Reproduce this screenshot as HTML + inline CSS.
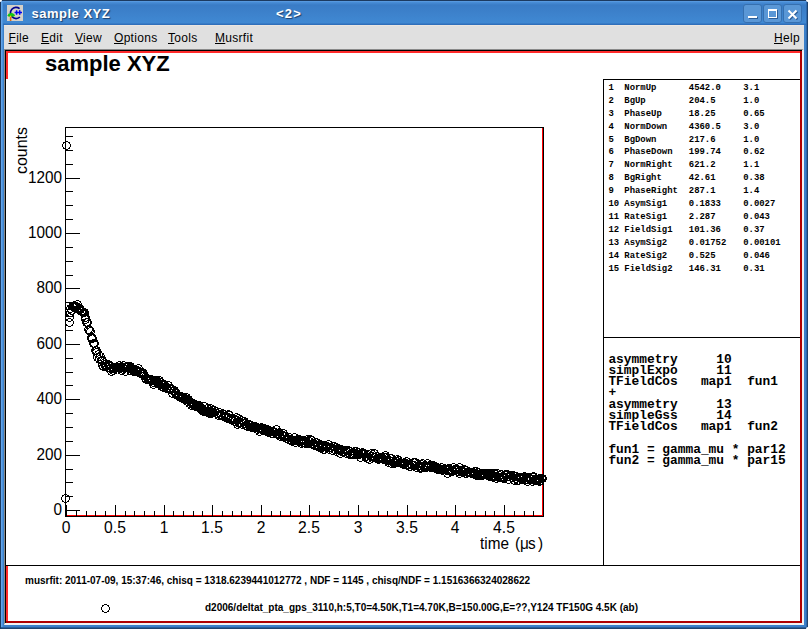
<!DOCTYPE html>
<html><head><meta charset="utf-8"><style>
*{margin:0;padding:0;box-sizing:border-box}
html,body{width:808px;height:629px;overflow:hidden;background:#fff}
body{position:relative;font-family:"Liberation Sans",sans-serif}
.a{position:absolute}
#win{left:0;top:0;width:808px;height:629px;background:#3b80ca}
#tb{left:0;top:0;width:808px;height:25px;background:linear-gradient(#1c3a60 0,#1c3a60 1px,#62a2e6 1px,#4a8fd8 2px,#3a7cc6 5px,#3d82cc 14px,#4089d3 23px,#2f6fbb 24px,#2f6fbb 25px)}
#lb{left:0;top:0;width:1px;height:629px;background:#1c3a60}
#lb2{left:1px;top:1px;width:2px;height:626px;background:linear-gradient(90deg,#62a4ea 0,#62a4ea 1px,#4e93dc 1px)}
#rb{left:806px;top:0;width:2px;height:629px;background:linear-gradient(90deg,#2e69ad 0,#2e69ad 1px,#1f4470 1px)}
#bb{left:1px;top:627px;width:806px;height:2px;background:linear-gradient(#2a5f9c 0,#2a5f9c 1px,#1f4470 1px)}
#c1{left:806px;top:0;width:2px;height:2px;background:#fff;border-bottom-left-radius:2px}
#c2{left:0;top:0;width:2px;height:2px;background:#fff;border-bottom-right-radius:2px}
#c3{left:806px;top:627px;width:2px;height:2px;background:#fff;border-top-left-radius:2px}
#menu{left:4px;top:25px;width:800px;height:24px;background:#e0e0e0;border-top:1px solid #ebe6e1}
.mi{position:absolute;top:5px;font-size:12px;color:#000;line-height:14px;letter-spacing:0.3px}
.mi u{text-decoration:underline}
#title{left:31.5px;top:5.6px;font-weight:bold;font-size:13px;color:#fff;letter-spacing:0.5px;text-shadow:1px 1px 1px #1d3f6a;line-height:15px}
#title2{left:276px;top:5.6px;font-weight:bold;font-size:13px;color:#fff;letter-spacing:1.2px;text-shadow:1px 1px 1px #1d3f6a;line-height:15px}
.btn{position:absolute;top:4px;width:19px;height:19px;background:#5a97d6;border:1px solid #3670b0;border-radius:3px}
#cf{left:4px;top:49px;width:800px;height:576px;background:#fff;border-top:1px solid #8a8a8a;border-left:1px solid #8a8a8a;border-right:2px solid #f2f2f2;border-bottom:2px solid #f2f2f2}
#cv{left:5px;top:50px;width:797px;height:573px;border-top:1px solid #000;border-left:1px solid #000}
.yl{position:absolute;width:60px;left:2px;text-align:right;font-size:17px;line-height:18px;color:#000;transform:scaleX(0.9);transform-origin:100% 50%}
.xl{position:absolute;width:60px;top:518.6px;text-align:center;font-size:17px;line-height:18px;color:#000;transform:scaleX(0.92)}
.pr span{position:absolute;top:0;font:bold 8.93px "Liberation Mono",monospace;line-height:11px;white-space:pre;color:#000}
.pr{position:absolute;left:0;top:0}
.th{position:absolute;left:608.4px;font:bold 12.85px "Liberation Mono",monospace;line-height:14px;white-space:pre;color:#000}
.tl{position:absolute;top:534.5px;font-size:17px;line-height:18px;white-space:nowrap;transform:scaleX(0.9);transform-origin:0 0}
.bt{position:absolute;font-weight:bold;font-size:10px;line-height:12px;white-space:pre;color:#000}
</style></head><body>
<div id="win" class="a"></div>
<div id="tb" class="a"></div>
<div id="lb" class="a"></div><div id="lb2" class="a"></div><div id="rb" class="a"></div><div id="bb" class="a"></div><div id="c1" class="a"></div><div id="c2" class="a"></div><div id="c3" class="a"></div>
<svg class="a" style="left:7px;top:5px" width="16" height="16" viewBox="0 0 16 16">
<rect width="16" height="16" fill="#d4d0c8"/>
<path d="M12.6 3.6A5.6 5.6 0 1 0 12.9 12" fill="none" stroke="#000090" stroke-width="1.7"/>
<path d="M7.6 7.5h7.4M9.6 5.2v4.6M12.7 5.2v4.6" stroke="#0000f0" stroke-width="1.5"/>
<path d="M0.3 10.8q0.8-2.6 3.8-2.7q3.2 0 3.9 2.6q-1 1.1-3.9 0.9q-2.9 0.2-3.8-0.8z" fill="#14b814"/>
<path d="M1.5 9.3l1 0.6M4 8.9l1 0.7M6 9.6l0.8 0.5" stroke="#00ff00" stroke-width="0.8"/>
<path d="M2.8 11.3h1.6v4.7h-1.6z" fill="#e06a10"/>
<circle cx="3.6" cy="11.3" r="0.8" fill="#f0e000"/>
</svg>
<div id="title" class="a">sample XYZ</div>
<div id="title2" class="a">&lt;2&gt;</div>
<div class="btn" style="left:743px"><div class="a" style="left:4px;top:11px;width:9px;height:2px;background:#fff;box-shadow:1px 1px 0 #2d5d96"></div></div>
<div class="btn" style="left:763px"><div class="a" style="left:4px;top:4px;width:9px;height:9px;border:1px solid #fff;border-top-width:2px;box-shadow:1px 1px 0 #2d5d96"></div></div>
<div class="btn" style="left:783px"><svg class="a" style="left:3px;top:4px" width="12" height="11"><path d="M2.5 2.5L10.5 10.5M10.5 2.5L2.5 10.5" stroke="#2d5d96" stroke-width="2"/><path d="M1.5 1.5L9.5 9.5M9.5 1.5L1.5 9.5" stroke="#fff" stroke-width="2"/></svg></div>
<div id="menu" class="a">
<div class="mi" style="left:4.5px"><u>F</u>ile</div>
<div class="mi" style="left:37px"><u>E</u>dit</div>
<div class="mi" style="left:71px"><u>V</u>iew</div>
<div class="mi" style="left:110px"><u>O</u>ptions</div>
<div class="mi" style="left:164px"><u>T</u>ools</div>
<div class="mi" style="left:211px"><u>M</u>usrfit</div>
<div class="mi" style="left:770px"><u>H</u>elp</div>
</div>
<div id="cf" class="a"></div>
<div id="cv" class="a"></div>
<svg class="a" style="left:0;top:0" width="808" height="629">
<g shape-rendering="crispEdges">
<rect x="6" y="51" width="796" height="2" fill="#ff2a2a"/>
<rect x="6" y="51" width="2" height="28" fill="#ff2a2a"/>
<rect x="6" y="566" width="2" height="57" fill="#ff2a2a"/>
<rect x="800" y="51" width="2" height="572" fill="#b00000"/>
<rect x="6" y="621" width="796" height="2" fill="#b00000"/>
<rect x="6" y="565" width="794" height="1" fill="#000"/>
<rect x="603" y="79" width="1" height="486" fill="#000"/>
<rect x="603" y="79" width="197" height="1" fill="#000"/>
<rect x="603" y="337" width="197" height="1" fill="#000"/>
</g>
<g stroke="#000" stroke-width="1" shape-rendering="crispEdges"><path d="M65.5 127.5H543.5V516.5H65.5Z" fill="none" stroke="#000" stroke-width="1"/><path d="M542.5 128V515.5H66" fill="none" stroke="#f00" stroke-width="1"/><path d="M66 510.5h14"/><path d="M66 496.5h7"/><path d="M66 482.5h7"/><path d="M66 469.5h7"/><path d="M66 455.5h14"/><path d="M66 441.5h7"/><path d="M66 427.5h7"/><path d="M66 413.5h7"/><path d="M66 399.5h14"/><path d="M66 385.5h7"/><path d="M66 372.5h7"/><path d="M66 358.5h7"/><path d="M66 344.5h14"/><path d="M66 330.5h7"/><path d="M66 316.5h7"/><path d="M66 302.5h7"/><path d="M66 288.5h14"/><path d="M66 275.5h7"/><path d="M66 261.5h7"/><path d="M66 247.5h7"/><path d="M66 233.5h14"/><path d="M66 219.5h7"/><path d="M66 205.5h7"/><path d="M66 191.5h7"/><path d="M66 178.5h14"/><path d="M66 164.5h7"/><path d="M66 150.5h7"/><path d="M66 136.5h7"/><path d="M66.5 516V505"/><path d="M76.5 516V510.5"/><path d="M86.5 516V510.5"/><path d="M95.5 516V510.5"/><path d="M105.5 516V510.5"/><path d="M115.5 516V505"/><path d="M125.5 516V510.5"/><path d="M134.5 516V510.5"/><path d="M144.5 516V510.5"/><path d="M154.5 516V510.5"/><path d="M164.5 516V505"/><path d="M173.5 516V510.5"/><path d="M183.5 516V510.5"/><path d="M193.5 516V510.5"/><path d="M202.5 516V510.5"/><path d="M212.5 516V505"/><path d="M222.5 516V510.5"/><path d="M232.5 516V510.5"/><path d="M241.5 516V510.5"/><path d="M251.5 516V510.5"/><path d="M261.5 516V505"/><path d="M271.5 516V510.5"/><path d="M280.5 516V510.5"/><path d="M290.5 516V510.5"/><path d="M300.5 516V510.5"/><path d="M309.5 516V505"/><path d="M319.5 516V510.5"/><path d="M329.5 516V510.5"/><path d="M339.5 516V510.5"/><path d="M348.5 516V510.5"/><path d="M358.5 516V505"/><path d="M368.5 516V510.5"/><path d="M378.5 516V510.5"/><path d="M387.5 516V510.5"/><path d="M397.5 516V510.5"/><path d="M407.5 516V505"/><path d="M416.5 516V510.5"/><path d="M426.5 516V510.5"/><path d="M436.5 516V510.5"/><path d="M446.5 516V510.5"/><path d="M455.5 516V505"/><path d="M465.5 516V510.5"/><path d="M475.5 516V510.5"/><path d="M485.5 516V510.5"/><path d="M494.5 516V510.5"/><path d="M504.5 516V505"/><path d="M514.5 516V510.5"/><path d="M524.5 516V510.5"/><path d="M533.5 516V510.5"/></g>
<defs><path id="m" d="M-1 -4h3v1h-3zM-3 -3h2v1h-2zM2 -3h2v1h-2zM-3 -2h1v1h-1zM3 -2h1v1h-1zM-4 -1h1v3h-1zM4 -1h1v3h-1zM-3 2h1v1h-1zM3 2h1v1h-1zM-3 3h2v1h-2zM2 3h2v1h-2zM-1 4h3v1h-3z"/></defs>
<g fill="#000" shape-rendering="crispEdges"><use href="#m" x="66" y="145"/><use href="#m" x="65" y="498"/><use href="#m" x="69" y="322"/><use href="#m" x="69" y="317"/><use href="#m" x="70" y="312"/><use href="#m" x="70" y="308"/><use href="#m" x="71" y="310"/><use href="#m" x="72" y="306"/><use href="#m" x="73" y="306"/><use href="#m" x="74" y="307"/><use href="#m" x="74" y="305"/><use href="#m" x="75" y="306"/><use href="#m" x="76" y="306"/><use href="#m" x="77" y="304"/><use href="#m" x="78" y="309"/><use href="#m" x="79" y="309"/><use href="#m" x="79" y="308"/><use href="#m" x="80" y="309"/><use href="#m" x="81" y="311"/><use href="#m" x="82" y="311"/><use href="#m" x="83" y="312"/><use href="#m" x="84" y="312"/><use href="#m" x="85" y="317"/><use href="#m" x="85" y="319"/><use href="#m" x="86" y="322"/><use href="#m" x="87" y="322"/><use href="#m" x="88" y="329"/><use href="#m" x="89" y="330"/><use href="#m" x="90" y="331"/><use href="#m" x="91" y="338"/><use href="#m" x="91" y="337"/><use href="#m" x="92" y="338"/><use href="#m" x="93" y="343"/><use href="#m" x="94" y="343"/><use href="#m" x="95" y="350"/><use href="#m" x="96" y="350"/><use href="#m" x="96" y="352"/><use href="#m" x="97" y="357"/><use href="#m" x="98" y="354"/><use href="#m" x="99" y="359"/><use href="#m" x="100" y="356"/><use href="#m" x="101" y="360"/><use href="#m" x="102" y="360"/><use href="#m" x="102" y="365"/><use href="#m" x="103" y="366"/><use href="#m" x="104" y="364"/><use href="#m" x="105" y="366"/><use href="#m" x="106" y="365"/><use href="#m" x="107" y="367"/><use href="#m" x="108" y="365"/><use href="#m" x="108" y="364"/><use href="#m" x="109" y="365"/><use href="#m" x="110" y="368"/><use href="#m" x="111" y="371"/><use href="#m" x="112" y="368"/><use href="#m" x="113" y="367"/><use href="#m" x="113" y="370"/><use href="#m" x="114" y="368"/><use href="#m" x="115" y="367"/><use href="#m" x="116" y="367"/><use href="#m" x="117" y="367"/><use href="#m" x="118" y="367"/><use href="#m" x="119" y="365"/><use href="#m" x="119" y="368"/><use href="#m" x="120" y="367"/><use href="#m" x="121" y="370"/><use href="#m" x="122" y="367"/><use href="#m" x="123" y="365"/><use href="#m" x="124" y="368"/><use href="#m" x="125" y="371"/><use href="#m" x="125" y="367"/><use href="#m" x="126" y="367"/><use href="#m" x="127" y="366"/><use href="#m" x="128" y="366"/><use href="#m" x="129" y="368"/><use href="#m" x="130" y="366"/><use href="#m" x="130" y="370"/><use href="#m" x="131" y="368"/><use href="#m" x="132" y="368"/><use href="#m" x="133" y="371"/><use href="#m" x="134" y="371"/><use href="#m" x="135" y="369"/><use href="#m" x="136" y="370"/><use href="#m" x="136" y="371"/><use href="#m" x="137" y="370"/><use href="#m" x="138" y="368"/><use href="#m" x="139" y="372"/><use href="#m" x="140" y="373"/><use href="#m" x="141" y="373"/><use href="#m" x="142" y="372"/><use href="#m" x="142" y="373"/><use href="#m" x="143" y="373"/><use href="#m" x="144" y="375"/><use href="#m" x="145" y="378"/><use href="#m" x="146" y="379"/><use href="#m" x="147" y="378"/><use href="#m" x="147" y="378"/><use href="#m" x="148" y="379"/><use href="#m" x="149" y="379"/><use href="#m" x="150" y="379"/><use href="#m" x="151" y="379"/><use href="#m" x="152" y="380"/><use href="#m" x="153" y="384"/><use href="#m" x="153" y="382"/><use href="#m" x="154" y="380"/><use href="#m" x="155" y="380"/><use href="#m" x="156" y="380"/><use href="#m" x="157" y="382"/><use href="#m" x="158" y="383"/><use href="#m" x="159" y="380"/><use href="#m" x="159" y="384"/><use href="#m" x="160" y="382"/><use href="#m" x="161" y="386"/><use href="#m" x="162" y="384"/><use href="#m" x="163" y="387"/><use href="#m" x="164" y="384"/><use href="#m" x="164" y="385"/><use href="#m" x="165" y="386"/><use href="#m" x="166" y="388"/><use href="#m" x="167" y="388"/><use href="#m" x="168" y="385"/><use href="#m" x="169" y="388"/><use href="#m" x="170" y="389"/><use href="#m" x="170" y="388"/><use href="#m" x="171" y="389"/><use href="#m" x="172" y="393"/><use href="#m" x="173" y="390"/><use href="#m" x="174" y="390"/><use href="#m" x="175" y="393"/><use href="#m" x="176" y="393"/><use href="#m" x="176" y="393"/><use href="#m" x="177" y="395"/><use href="#m" x="178" y="395"/><use href="#m" x="179" y="396"/><use href="#m" x="180" y="397"/><use href="#m" x="181" y="397"/><use href="#m" x="181" y="396"/><use href="#m" x="182" y="397"/><use href="#m" x="183" y="397"/><use href="#m" x="184" y="399"/><use href="#m" x="185" y="398"/><use href="#m" x="186" y="397"/><use href="#m" x="187" y="401"/><use href="#m" x="187" y="399"/><use href="#m" x="188" y="399"/><use href="#m" x="189" y="403"/><use href="#m" x="190" y="402"/><use href="#m" x="191" y="405"/><use href="#m" x="192" y="404"/><use href="#m" x="193" y="403"/><use href="#m" x="193" y="404"/><use href="#m" x="194" y="405"/><use href="#m" x="195" y="406"/><use href="#m" x="196" y="405"/><use href="#m" x="197" y="406"/><use href="#m" x="198" y="405"/><use href="#m" x="198" y="407"/><use href="#m" x="199" y="405"/><use href="#m" x="200" y="408"/><use href="#m" x="201" y="409"/><use href="#m" x="202" y="410"/><use href="#m" x="203" y="411"/><use href="#m" x="204" y="406"/><use href="#m" x="204" y="410"/><use href="#m" x="205" y="411"/><use href="#m" x="206" y="411"/><use href="#m" x="207" y="408"/><use href="#m" x="208" y="411"/><use href="#m" x="209" y="413"/><use href="#m" x="210" y="408"/><use href="#m" x="210" y="412"/><use href="#m" x="211" y="413"/><use href="#m" x="212" y="410"/><use href="#m" x="213" y="412"/><use href="#m" x="214" y="410"/><use href="#m" x="215" y="411"/><use href="#m" x="215" y="411"/><use href="#m" x="216" y="413"/><use href="#m" x="217" y="413"/><use href="#m" x="218" y="415"/><use href="#m" x="219" y="412"/><use href="#m" x="220" y="414"/><use href="#m" x="221" y="415"/><use href="#m" x="221" y="415"/><use href="#m" x="222" y="413"/><use href="#m" x="223" y="416"/><use href="#m" x="224" y="414"/><use href="#m" x="225" y="416"/><use href="#m" x="226" y="416"/><use href="#m" x="227" y="418"/><use href="#m" x="227" y="417"/><use href="#m" x="228" y="414"/><use href="#m" x="229" y="415"/><use href="#m" x="230" y="419"/><use href="#m" x="231" y="418"/><use href="#m" x="232" y="420"/><use href="#m" x="232" y="419"/><use href="#m" x="233" y="418"/><use href="#m" x="234" y="421"/><use href="#m" x="235" y="419"/><use href="#m" x="236" y="417"/><use href="#m" x="237" y="424"/><use href="#m" x="238" y="418"/><use href="#m" x="238" y="422"/><use href="#m" x="239" y="423"/><use href="#m" x="240" y="422"/><use href="#m" x="241" y="420"/><use href="#m" x="242" y="424"/><use href="#m" x="243" y="421"/><use href="#m" x="244" y="421"/><use href="#m" x="244" y="423"/><use href="#m" x="245" y="425"/><use href="#m" x="246" y="425"/><use href="#m" x="247" y="426"/><use href="#m" x="248" y="424"/><use href="#m" x="249" y="425"/><use href="#m" x="249" y="424"/><use href="#m" x="250" y="425"/><use href="#m" x="251" y="427"/><use href="#m" x="252" y="426"/><use href="#m" x="253" y="427"/><use href="#m" x="254" y="426"/><use href="#m" x="255" y="426"/><use href="#m" x="255" y="427"/><use href="#m" x="256" y="427"/><use href="#m" x="257" y="429"/><use href="#m" x="258" y="428"/><use href="#m" x="259" y="431"/><use href="#m" x="260" y="428"/><use href="#m" x="261" y="428"/><use href="#m" x="261" y="427"/><use href="#m" x="262" y="429"/><use href="#m" x="263" y="430"/><use href="#m" x="264" y="428"/><use href="#m" x="265" y="429"/><use href="#m" x="266" y="431"/><use href="#m" x="266" y="430"/><use href="#m" x="267" y="429"/><use href="#m" x="268" y="432"/><use href="#m" x="269" y="431"/><use href="#m" x="270" y="431"/><use href="#m" x="271" y="433"/><use href="#m" x="272" y="433"/><use href="#m" x="272" y="431"/><use href="#m" x="273" y="431"/><use href="#m" x="274" y="432"/><use href="#m" x="275" y="432"/><use href="#m" x="276" y="429"/><use href="#m" x="277" y="434"/><use href="#m" x="278" y="433"/><use href="#m" x="278" y="434"/><use href="#m" x="279" y="432"/><use href="#m" x="280" y="436"/><use href="#m" x="281" y="434"/><use href="#m" x="282" y="435"/><use href="#m" x="283" y="433"/><use href="#m" x="283" y="436"/><use href="#m" x="284" y="436"/><use href="#m" x="285" y="436"/><use href="#m" x="286" y="438"/><use href="#m" x="287" y="438"/><use href="#m" x="288" y="439"/><use href="#m" x="289" y="437"/><use href="#m" x="289" y="437"/><use href="#m" x="290" y="439"/><use href="#m" x="291" y="440"/><use href="#m" x="292" y="441"/><use href="#m" x="293" y="440"/><use href="#m" x="294" y="437"/><use href="#m" x="295" y="440"/><use href="#m" x="295" y="442"/><use href="#m" x="296" y="440"/><use href="#m" x="297" y="439"/><use href="#m" x="298" y="441"/><use href="#m" x="299" y="439"/><use href="#m" x="300" y="441"/><use href="#m" x="300" y="440"/><use href="#m" x="301" y="443"/><use href="#m" x="302" y="442"/><use href="#m" x="303" y="440"/><use href="#m" x="304" y="442"/><use href="#m" x="305" y="443"/><use href="#m" x="306" y="441"/><use href="#m" x="306" y="441"/><use href="#m" x="307" y="439"/><use href="#m" x="308" y="443"/><use href="#m" x="309" y="441"/><use href="#m" x="310" y="439"/><use href="#m" x="311" y="440"/><use href="#m" x="312" y="443"/><use href="#m" x="312" y="444"/><use href="#m" x="313" y="443"/><use href="#m" x="314" y="445"/><use href="#m" x="315" y="442"/><use href="#m" x="316" y="442"/><use href="#m" x="317" y="446"/><use href="#m" x="318" y="445"/><use href="#m" x="318" y="445"/><use href="#m" x="319" y="447"/><use href="#m" x="320" y="444"/><use href="#m" x="321" y="445"/><use href="#m" x="322" y="447"/><use href="#m" x="323" y="449"/><use href="#m" x="323" y="446"/><use href="#m" x="324" y="449"/><use href="#m" x="325" y="445"/><use href="#m" x="326" y="447"/><use href="#m" x="327" y="446"/><use href="#m" x="328" y="444"/><use href="#m" x="329" y="447"/><use href="#m" x="329" y="449"/><use href="#m" x="330" y="447"/><use href="#m" x="331" y="447"/><use href="#m" x="332" y="450"/><use href="#m" x="333" y="446"/><use href="#m" x="334" y="446"/><use href="#m" x="335" y="447"/><use href="#m" x="335" y="447"/><use href="#m" x="336" y="451"/><use href="#m" x="337" y="449"/><use href="#m" x="338" y="448"/><use href="#m" x="339" y="449"/><use href="#m" x="340" y="453"/><use href="#m" x="340" y="449"/><use href="#m" x="341" y="449"/><use href="#m" x="342" y="451"/><use href="#m" x="343" y="452"/><use href="#m" x="344" y="451"/><use href="#m" x="345" y="450"/><use href="#m" x="346" y="450"/><use href="#m" x="346" y="453"/><use href="#m" x="347" y="452"/><use href="#m" x="348" y="450"/><use href="#m" x="349" y="454"/><use href="#m" x="350" y="454"/><use href="#m" x="351" y="453"/><use href="#m" x="352" y="453"/><use href="#m" x="352" y="454"/><use href="#m" x="353" y="452"/><use href="#m" x="354" y="451"/><use href="#m" x="355" y="454"/><use href="#m" x="356" y="451"/><use href="#m" x="357" y="454"/><use href="#m" x="357" y="452"/><use href="#m" x="358" y="454"/><use href="#m" x="359" y="454"/><use href="#m" x="360" y="457"/><use href="#m" x="361" y="453"/><use href="#m" x="362" y="452"/><use href="#m" x="363" y="454"/><use href="#m" x="363" y="453"/><use href="#m" x="364" y="454"/><use href="#m" x="365" y="456"/><use href="#m" x="366" y="456"/><use href="#m" x="367" y="458"/><use href="#m" x="368" y="454"/><use href="#m" x="369" y="459"/><use href="#m" x="369" y="459"/><use href="#m" x="370" y="456"/><use href="#m" x="371" y="453"/><use href="#m" x="372" y="456"/><use href="#m" x="373" y="457"/><use href="#m" x="374" y="453"/><use href="#m" x="374" y="457"/><use href="#m" x="375" y="457"/><use href="#m" x="376" y="456"/><use href="#m" x="377" y="458"/><use href="#m" x="378" y="459"/><use href="#m" x="379" y="457"/><use href="#m" x="380" y="458"/><use href="#m" x="380" y="457"/><use href="#m" x="381" y="457"/><use href="#m" x="382" y="458"/><use href="#m" x="383" y="459"/><use href="#m" x="384" y="457"/><use href="#m" x="385" y="455"/><use href="#m" x="386" y="460"/><use href="#m" x="386" y="457"/><use href="#m" x="387" y="460"/><use href="#m" x="388" y="462"/><use href="#m" x="389" y="460"/><use href="#m" x="390" y="458"/><use href="#m" x="391" y="458"/><use href="#m" x="391" y="463"/><use href="#m" x="392" y="461"/><use href="#m" x="393" y="462"/><use href="#m" x="394" y="463"/><use href="#m" x="395" y="462"/><use href="#m" x="396" y="461"/><use href="#m" x="397" y="461"/><use href="#m" x="397" y="459"/><use href="#m" x="398" y="460"/><use href="#m" x="399" y="462"/><use href="#m" x="400" y="462"/><use href="#m" x="401" y="463"/><use href="#m" x="402" y="463"/><use href="#m" x="403" y="463"/><use href="#m" x="403" y="464"/><use href="#m" x="404" y="462"/><use href="#m" x="405" y="463"/><use href="#m" x="406" y="461"/><use href="#m" x="407" y="465"/><use href="#m" x="408" y="464"/><use href="#m" x="408" y="464"/><use href="#m" x="409" y="466"/><use href="#m" x="410" y="466"/><use href="#m" x="411" y="464"/><use href="#m" x="412" y="465"/><use href="#m" x="413" y="462"/><use href="#m" x="414" y="465"/><use href="#m" x="414" y="465"/><use href="#m" x="415" y="462"/><use href="#m" x="416" y="467"/><use href="#m" x="417" y="464"/><use href="#m" x="418" y="466"/><use href="#m" x="419" y="465"/><use href="#m" x="420" y="467"/><use href="#m" x="420" y="468"/><use href="#m" x="421" y="464"/><use href="#m" x="422" y="463"/><use href="#m" x="423" y="466"/><use href="#m" x="424" y="467"/><use href="#m" x="425" y="466"/><use href="#m" x="425" y="465"/><use href="#m" x="426" y="467"/><use href="#m" x="427" y="463"/><use href="#m" x="428" y="466"/><use href="#m" x="429" y="465"/><use href="#m" x="430" y="467"/><use href="#m" x="431" y="466"/><use href="#m" x="431" y="465"/><use href="#m" x="432" y="467"/><use href="#m" x="433" y="465"/><use href="#m" x="434" y="467"/><use href="#m" x="435" y="467"/><use href="#m" x="436" y="467"/><use href="#m" x="437" y="467"/><use href="#m" x="437" y="469"/><use href="#m" x="438" y="468"/><use href="#m" x="439" y="469"/><use href="#m" x="440" y="469"/><use href="#m" x="441" y="467"/><use href="#m" x="442" y="470"/><use href="#m" x="442" y="469"/><use href="#m" x="443" y="469"/><use href="#m" x="444" y="468"/><use href="#m" x="445" y="469"/><use href="#m" x="446" y="470"/><use href="#m" x="447" y="473"/><use href="#m" x="448" y="468"/><use href="#m" x="448" y="470"/><use href="#m" x="449" y="469"/><use href="#m" x="450" y="471"/><use href="#m" x="451" y="470"/><use href="#m" x="452" y="471"/><use href="#m" x="453" y="467"/><use href="#m" x="454" y="469"/><use href="#m" x="454" y="469"/><use href="#m" x="455" y="470"/><use href="#m" x="456" y="469"/><use href="#m" x="457" y="469"/><use href="#m" x="458" y="471"/><use href="#m" x="459" y="473"/><use href="#m" x="459" y="467"/><use href="#m" x="460" y="470"/><use href="#m" x="461" y="471"/><use href="#m" x="462" y="471"/><use href="#m" x="463" y="471"/><use href="#m" x="464" y="469"/><use href="#m" x="465" y="470"/><use href="#m" x="465" y="473"/><use href="#m" x="466" y="473"/><use href="#m" x="467" y="472"/><use href="#m" x="468" y="471"/><use href="#m" x="469" y="472"/><use href="#m" x="470" y="472"/><use href="#m" x="471" y="473"/><use href="#m" x="471" y="473"/><use href="#m" x="472" y="472"/><use href="#m" x="473" y="473"/><use href="#m" x="474" y="471"/><use href="#m" x="475" y="474"/><use href="#m" x="476" y="475"/><use href="#m" x="476" y="471"/><use href="#m" x="477" y="474"/><use href="#m" x="478" y="472"/><use href="#m" x="479" y="475"/><use href="#m" x="480" y="475"/><use href="#m" x="481" y="473"/><use href="#m" x="482" y="475"/><use href="#m" x="482" y="473"/><use href="#m" x="483" y="473"/><use href="#m" x="484" y="473"/><use href="#m" x="485" y="474"/><use href="#m" x="486" y="473"/><use href="#m" x="487" y="474"/><use href="#m" x="488" y="473"/><use href="#m" x="488" y="475"/><use href="#m" x="489" y="476"/><use href="#m" x="490" y="474"/><use href="#m" x="491" y="473"/><use href="#m" x="492" y="476"/><use href="#m" x="493" y="477"/><use href="#m" x="493" y="475"/><use href="#m" x="494" y="473"/><use href="#m" x="495" y="476"/><use href="#m" x="496" y="478"/><use href="#m" x="497" y="473"/><use href="#m" x="498" y="477"/><use href="#m" x="499" y="475"/><use href="#m" x="499" y="475"/><use href="#m" x="500" y="477"/><use href="#m" x="501" y="474"/><use href="#m" x="502" y="477"/><use href="#m" x="503" y="478"/><use href="#m" x="504" y="477"/><use href="#m" x="505" y="475"/><use href="#m" x="505" y="474"/><use href="#m" x="506" y="475"/><use href="#m" x="507" y="474"/><use href="#m" x="508" y="479"/><use href="#m" x="509" y="476"/><use href="#m" x="510" y="475"/><use href="#m" x="510" y="475"/><use href="#m" x="511" y="475"/><use href="#m" x="512" y="477"/><use href="#m" x="513" y="475"/><use href="#m" x="514" y="480"/><use href="#m" x="515" y="476"/><use href="#m" x="516" y="476"/><use href="#m" x="516" y="478"/><use href="#m" x="517" y="480"/><use href="#m" x="518" y="480"/><use href="#m" x="519" y="477"/><use href="#m" x="520" y="478"/><use href="#m" x="521" y="478"/><use href="#m" x="522" y="479"/><use href="#m" x="522" y="479"/><use href="#m" x="523" y="477"/><use href="#m" x="524" y="476"/><use href="#m" x="525" y="479"/><use href="#m" x="526" y="477"/><use href="#m" x="527" y="481"/><use href="#m" x="527" y="479"/><use href="#m" x="528" y="477"/><use href="#m" x="529" y="478"/><use href="#m" x="530" y="478"/><use href="#m" x="531" y="479"/><use href="#m" x="532" y="481"/><use href="#m" x="533" y="477"/><use href="#m" x="533" y="476"/><use href="#m" x="534" y="480"/><use href="#m" x="535" y="479"/><use href="#m" x="536" y="480"/><use href="#m" x="537" y="480"/><use href="#m" x="538" y="479"/><use href="#m" x="539" y="481"/><use href="#m" x="539" y="478"/><use href="#m" x="540" y="480"/><use href="#m" x="541" y="478"/><use href="#m" x="542" y="478"/><use href="#m" x="105" y="608"/></g>
</svg>
<div class="a" style="left:45px;top:50.8px;font-weight:bold;font-size:22px;line-height:25px;letter-spacing:0px">sample XYZ</div>
<div class="a" style="left:13px;top:173.5px;width:60px;height:18px;transform-origin:0 0;transform:rotate(-90deg) scaleX(0.935);font-size:17px;line-height:18px;white-space:nowrap">counts</div>
<div class="yl" style="top:501.2px">0</div><div class="yl" style="top:445.8px">200</div><div class="yl" style="top:390.3px">400</div><div class="yl" style="top:334.9px">600</div><div class="yl" style="top:279.4px">800</div><div class="yl" style="top:224.0px">1000</div><div class="yl" style="top:168.6px">1200</div><div class="xl" style="left:36.2px">0</div><div class="xl" style="left:84.8px">0.5</div><div class="xl" style="left:133.5px">1</div><div class="xl" style="left:182.1px">1.5</div><div class="xl" style="left:230.8px">2</div><div class="xl" style="left:279.4px">2.5</div><div class="xl" style="left:328.1px">3</div><div class="xl" style="left:376.8px">3.5</div><div class="xl" style="left:425.4px">4</div><div class="xl" style="left:474.0px">4.5</div>
<div class="tl" style="left:479.6px">time</div><div class="tl" style="left:514.6px">(</div><div class="tl" style="left:519.6px">μ</div><div class="tl" style="left:527.6px">s</div><div class="tl" style="left:537.6px">)</div>
<div class="pr" style="top:82.80px"><span style="left:608.5px">1</span><span style="left:624.3px">NormUp</span><span style="left:688.8px">4542.0</span><span style="left:743.2px">3.1</span></div><div class="pr" style="top:95.73px"><span style="left:608.5px">2</span><span style="left:624.3px">BgUp</span><span style="left:688.8px">204.5</span><span style="left:743.2px">1.0</span></div><div class="pr" style="top:108.66px"><span style="left:608.5px">3</span><span style="left:624.3px">PhaseUp</span><span style="left:688.8px">18.25</span><span style="left:743.2px">0.65</span></div><div class="pr" style="top:121.59px"><span style="left:608.5px">4</span><span style="left:624.3px">NormDown</span><span style="left:688.8px">4360.5</span><span style="left:743.2px">3.0</span></div><div class="pr" style="top:134.52px"><span style="left:608.5px">5</span><span style="left:624.3px">BgDown</span><span style="left:688.8px">217.6</span><span style="left:743.2px">1.0</span></div><div class="pr" style="top:147.45px"><span style="left:608.5px">6</span><span style="left:624.3px">PhaseDown</span><span style="left:688.8px">199.74</span><span style="left:743.2px">0.62</span></div><div class="pr" style="top:160.38px"><span style="left:608.5px">7</span><span style="left:624.3px">NormRight</span><span style="left:688.8px">621.2</span><span style="left:743.2px">1.1</span></div><div class="pr" style="top:173.31px"><span style="left:608.5px">8</span><span style="left:624.3px">BgRight</span><span style="left:688.8px">42.61</span><span style="left:743.2px">0.38</span></div><div class="pr" style="top:186.24px"><span style="left:608.5px">9</span><span style="left:624.3px">PhaseRight</span><span style="left:688.8px">287.1</span><span style="left:743.2px">1.4</span></div><div class="pr" style="top:199.17px"><span style="left:608.5px">10</span><span style="left:624.3px">AsymSig1</span><span style="left:688.8px">0.1833</span><span style="left:743.2px">0.0027</span></div><div class="pr" style="top:212.10px"><span style="left:608.5px">11</span><span style="left:624.3px">RateSig1</span><span style="left:688.8px">2.287</span><span style="left:743.2px">0.043</span></div><div class="pr" style="top:225.03px"><span style="left:608.5px">12</span><span style="left:624.3px">FieldSig1</span><span style="left:688.8px">101.36</span><span style="left:743.2px">0.37</span></div><div class="pr" style="top:237.96px"><span style="left:608.5px">13</span><span style="left:624.3px">AsymSig2</span><span style="left:688.8px">0.01752</span><span style="left:743.2px">0.00101</span></div><div class="pr" style="top:250.89px"><span style="left:608.5px">14</span><span style="left:624.3px">RateSig2</span><span style="left:688.8px">0.525</span><span style="left:743.2px">0.046</span></div><div class="pr" style="top:263.82px"><span style="left:608.5px">15</span><span style="left:624.3px">FieldSig2</span><span style="left:688.8px">146.31</span><span style="left:743.2px">0.31</span></div><div class="th" style="top:352.70px">asymmetry&nbsp;&nbsp;&nbsp;&nbsp;&nbsp;10</div><div class="th" style="top:363.96px">simplExpo&nbsp;&nbsp;&nbsp;&nbsp;&nbsp;11</div><div class="th" style="top:375.22px">TFieldCos&nbsp;&nbsp;&nbsp;map1&nbsp;&nbsp;fun1</div><div class="th" style="top:386.48px">+</div><div class="th" style="top:397.74px">asymmetry&nbsp;&nbsp;&nbsp;&nbsp;&nbsp;13</div><div class="th" style="top:409.00px">simpleGss&nbsp;&nbsp;&nbsp;&nbsp;&nbsp;14</div><div class="th" style="top:420.26px">TFieldCos&nbsp;&nbsp;&nbsp;map1&nbsp;&nbsp;fun2</div><div class="th" style="top:431.52px"></div><div class="th" style="top:442.78px">fun1&nbsp;=&nbsp;gamma_mu&nbsp;*&nbsp;par12</div><div class="th" style="top:454.04px">fun2&nbsp;=&nbsp;gamma_mu&nbsp;*&nbsp;par15</div>
<div class="bt" style="left:25px;top:575px">musrfit: 2011-07-09, 15:37:46, chisq = 1318.6239441012772 , NDF = 1145 , chisq/NDF = 1.1516366324028622</div>
<div class="bt" style="left:205px;top:602px">d2006/deltat_pta_gps_3110,h:5,T0=4.50K,T1=4.70K,B=150.00G,E=??,Y124 TF150G 4.5K (ab)</div>
</body></html>
